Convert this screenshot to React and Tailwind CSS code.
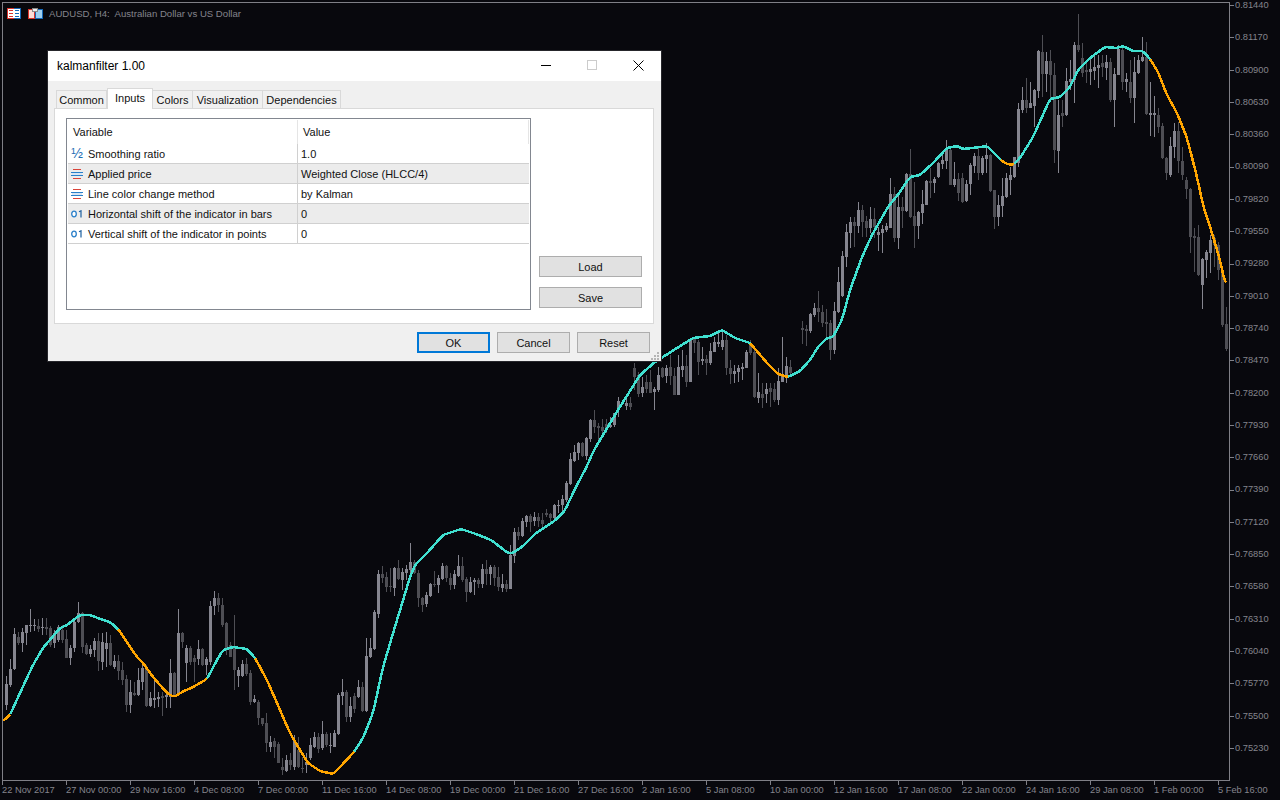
import React from "react";

const pts = [[3,721],[10,715],[20,693],[33,665],[43,648],[60,628],[67,625],[80,615],[90,615],[103,620],[110,622],[118,629],[127,642],[137,657],[143,663],[153,677],[167,693],[174,697],[182,692],[193,687],[207,679],[217,660],[223,650],[233,647],[247,649],[255,658],[267,680],[277,703],[290,733],[300,750],[308,763],[320,771],[333,774],[340,767],[354,752],[363,738],[373,713],[383,667],[397,620],[401,607],[410,577],[415,565],[428,552],[443,535],[461,529],[476,534],[491,540],[508,553],[513,553],[523,546],[536,533],[553,522],[564,512],[576,487],[586,468],[594,450],[618,410],[640,375],[655,362],[677,348],[693,338],[710,336],[722,330],[735,338],[750,343],[767,363],[778,374],[788,377],[800,371],[810,360],[818,347],[827,338],[833,337],[842,320],[850,290],[862,257],[872,235],[888,207],[900,192],[910,177],[920,175],[933,163],[947,148],[957,146],[963,149],[973,148],[987,146],[1002,161],[1007,164],[1013,165],[1020,158],[1033,137],[1050,99],[1060,97],[1070,87],[1078,70],[1090,58],[1105,47],[1117,48],[1123,46],[1133,51],[1143,51],[1150,59],[1158,72],[1167,95],[1177,113],[1187,138],[1197,177],[1203,205],[1212,233],[1220,260],[1226,287]];
const orangeRanges = [[3,10],[118,207],[255,354],[750,788],[1001,1014],[1150,1227]];
function lerp(arr, x) {
  for (let i = 1; i < arr.length; i++) if (x <= arr[i][0]) { const a = arr[i-1], b = arr[i]; return a[1] + (b[1]-a[1]) * (x-a[0]) / (b[0]-a[0]); }
  return arr[arr.length-1][1];
}
function smooth(x) {
  let s = 0, n = 0;
  for (let k = -2; k <= 2; k++) { const xx = x + k; if (xx < 3 || xx > 1226) continue; s += lerp(pts, xx); n++; }
  return (s / n).toFixed(1);
}
function segments() {
  const out = [];
  let cur = null, curO = null;
  for (let x = 3; x <= 1226; x += 1) {
    const o = orangeRanges.some(([a,b]) => x >= a && x < b);
    if (o !== curO) { if (cur) cur.d += ` L${x} ${smooth(x)}`; cur = { o, d: `M${x} ${smooth(x)}` }; out.push(cur); curO = o; }
    else cur.d += ` L${x} ${smooth(x)}`;
  }
  return out;
}

const z6 = [[19,258,282,345,360,1],[31,207,237,285,290,1],[43,115,132,238,240,1],[55,125,140,158,165,0],[67,115,125,158,185,1],[79,105,105,130,165,1],[91,57,105,108,125,1],[103,88,105,108,122,1],[115,88,108,118,125,0],[127,85,110,115,135,1],[139,85,110,118,135,0],[151,108,115,165,170,0],[163,120,130,160,175,1],[175,105,110,150,155,1],[187,105,120,150,160,0],[199,120,148,203,205,0],[211,165,175,205,225,1],[223,90,95,175,185,1],[235,37,70,95,100,1],[247,65,70,170,188,0],[259,160,165,192,195,0],[271,165,178,192,200,1],[283,145,152,180,200,1],[295,130,152,212,242,0],[307,130,155,215,240,1],[319,127,158,178,230,1],[331,135,158,225,228,0],[343,195,212,232,238,1],[355,195,212,242,270,0],[367,215,240,270,285,0],[379,255,268,345,365,0],[391,270,305,345,370,1],[403,275,308,315,318,0],[415,235,270,315,318,1],[427,225,235,275,300,1],[439,225,235,348,350,0],[451,305,325,348,350,1],[463,265,325,330,355,1],[475,305,320,328,352,1],[487,305,318,325,377,0],[499,305,315,322,355,1],[511,208,250,322,355,1],[523,245,250,315,318,0],[535,57,128,310,315,1],[547,125,128,155,175,0],[559,165,175,220,275,1],[571,168,175,215,225,0],[583,195,205,215,275,0],[595,150,178,208,225,1],[607,175,178,225,228,0],[619,200,208,225,255,1],[631,32,48,215,225,1],[643,3,25,48,75,1],[655,10,25,45,65,0],[667,25,45,105,110,0],[679,95,100,175,195,0],[691,155,165,200,200,0],[703,75,175,240,300,0],[715,230,240,258,290,1],[727,210,222,258,260,1],[739,205,222,252,258,0],[751,240,248,335,345,0],[763,315,328,336,340,1],[775,330,335,385,405,0],[787,383,385,403,408,0],[799,370,398,460,485,0],[811,438,455,470,485,1],[823,445,452,470,505,0],[835,455,462,518,520,0],[847,505,530,540,555,0],[859,495,510,542,545,1],[871,490,510,525,540,0],[883,435,450,530,540,1],[895,440,480,532,535,0],[907,500,533,538,550,0],[919,490,515,525,550,1],[931,445,465,505,510,1],[943,425,440,470,475,1],[955,430,440,477,488,0],[967,392,432,475,480,1],[979,425,432,465,470,0],[991,430,465,468,488,1],[1003,420,428,470,470,1],[1015,310,315,432,435,1],[1027,268,307,318,345,1],[1039,300,305,380,395,0],[1051,320,348,382,395,1],[1063,310,318,358,368,0],[1075,270,292,320,325,1],[1087,275,292,362,365,0],[1099,145,198,362,365,1],[1111,145,175,200,205,1],[1123,60,67,178,180,1]];
const zA = [[7,480,492,612,625,1],[19,468,492,503,520,0],[31,485,502,530,545,0],[43,475,528,532,545,0],[55,472,474,533,558,1],[67,450,475,507,510,0],[79,475,487,510,540,1],[91,465,477,488,510,1],[103,400,457,480,490,1],[115,450,457,490,492,0],[127,480,490,563,590,0],[139,560,565,585,605,0],[151,545,555,582,592,1],[163,518,522,558,560,1],[175,483,522,526,530,0],[187,495,505,525,548,1],[199,460,468,507,510,1],[211,465,468,505,515,0],[223,490,503,525,540,0],[235,480,492,525,537,1],[247,435,468,498,500,1],[259,440,468,510,515,0],[271,500,507,545,575,0],[283,500,516,547,548,1],[295,505,510,515,555,1],[307,505,510,522,535,0],[319,462,477,522,535,1],[331,450,477,492,525,0],[343,465,472,492,525,1],[355,465,472,503,528,0],[367,472,501,532,542,0],[379,492,522,535,545,1],[391,510,522,537,545,0],[403,405,435,537,537,1],[415,355,366,437,460,1],[427,352,366,378,390,0],[439,325,333,378,380,1],[451,315,318,337,350,1],[463,313,318,337,365,0],[475,305,321,333,348,1],[487,310,321,333,350,0],[499,308,330,343,360,0],[511,297,309,315,320,0],[523,310,311,325,335,0],[535,283,285,325,330,1],[547,270,285,288,310,1],[559,255,268,285,305,1],[571,212,220,270,275,1],[583,130,147,223,225,1],[595,105,127,152,155,1],[607,95,100,130,150,1],[619,97,98,137,140,0],[631,80,84,137,150,1],[643,28,30,87,95,1],[655,0,30,50,70,0],[667,40,47,53,95,0],[679,28,50,63,85,0],[691,28,42,55,70,0],[703,20,45,50,55,1],[715,10,10,45,50,1]];
const z4 = [[655,470,482,510,530,1],[679,465,488,498,510,1],[691,470,488,500,510,0],[703,370,385,410,450,0],[715,395,405,462,470,0],[727,410,440,460,470,1],[739,405,425,448,460,0],[751,390,425,460,460,0],[763,440,448,455,510,1],[775,380,405,450,455,1],[787,380,385,410,415,0],[799,375,383,408,430,1],[811,345,382,408,435,0],[823,385,408,465,465,0],[835,345,380,465,465,1],[847,330,378,390,410,1],[859,345,378,425,440,0],[871,295,300,425,425,1],[883,290,298,310,340,0],[895,300,305,365,405,0],[907,320,358,362,375,1],[919,345,358,370,405,0],[931,310,332,370,375,1],[943,290,305,335,335,1],[955,275,305,313,320,1],[967,270,300,320,330,1],[979,285,300,385,405,0],[991,360,385,402,432,0],[1003,375,392,402,430,1],[1015,375,385,397,425,1],[1027,370,382,388,420,1],[1039,330,335,385,385,1],[1051,300,310,340,345,0],[1063,320,335,472,475,0],[1075,400,457,475,490,1],[1087,430,463,475,505,0],[1099,430,447,463,490,1],[1111,430,445,455,500,0],[1123,430,447,480,485,0],[1135,385,422,480,495,1],[1147,290,405,425,425,1],[1159,350,378,405,430,1],[1171,360,382,400,405,0]];
const zB = [[7,543,565,570,612,0],[19,555,567,573,618,0],[31,520,522,573,578,1],[43,490,503,525,530,1],[55,453,503,517,545,0],[67,495,517,548,560,0],[79,507,545,552,595,0],[91,540,550,630,660,0],[103,487,513,630,642,1],[115,380,426,517,520,1],[127,333,348,468,470,1],[139,252,276,350,380,1],[151,230,246,278,325,1],[163,230,246,258,320,0],[175,186,210,258,278,1],[187,195,210,246,290,0],[199,228,242,264,290,0],[211,200,237,265,280,1],[223,205,237,262,295,0],[235,260,277,285,333,1],[247,255,267,278,338,1],[259,250,258,270,275,1],[271,114,162,264,265,1],[283,140,162,294,305,0],[295,165,200,293,326,1],[307,170,200,212,265,0],[319,100,102,212,215,1],[331,27,102,230,235,0],[343,125,228,258,323,0],[355,213,216,258,296,1],[367,150,192,218,252,1],[379,120,122,194,195,1],[391,85,122,130,175,0],[403,112,116,128,160,1],[415,65,68,110,115,1],[427,40,60,72,88,1],[439,0,30,62,88,1],[451,28,30,135,135,0],[463,66,117,135,140,1],[475,100,117,158,182,0],[487,98,114,185,188,0],[499,120,132,184,187,1],[511,70,75,133,165,1],[523,40,48,78,98,1],[535,25,48,98,120,0],[547,48,53,98,105,1],[559,10,45,57,100,1],[571,42,44,152,155,0],[583,150,150,230,268,0],[595,165,195,232,258,1],[607,115,168,198,232,1],[619,100,114,172,174,1],[631,82,105,120,165,1]];
const z5 = [[44,470,470,530,533,1],[55,310,328,490,500,1],[67,262,300,330,340,1],[79,235,300,325,340,0],[91,245,310,325,325,1],[103,268,270,318,380,1],[115,150,152,272,295,1],[127,105,155,222,290,0],[139,155,183,222,275,1],[151,150,182,225,300,0],[163,190,225,450,490,0],[175,300,345,452,520,1],[187,300,340,348,380,0],[199,205,243,345,348,1],[211,180,237,245,270,1],[223,125,135,240,310,1],[235,42,135,150,155,0],[247,130,175,220,230,0],[259,180,210,215,250,0],[271,170,208,215,255,1],[283,165,200,212,240,1],[295,165,195,205,265,1],[307,165,190,200,230,0],[319,165,185,205,240,1],[331,175,185,300,305,0],[343,205,222,300,380,1],[355,135,148,225,225,1],[367,140,150,245,270,0],[379,220,237,245,275,1],[391,180,245,293,310,0],[403,170,215,293,368,1],[415,165,180,220,222,1],[427,110,170,182,185,1],[439,125,170,342,345,0],[451,245,340,345,408,1],[463,288,340,345,410,1],[475,325,345,380,400,0],[487,370,378,475,478,0],[499,470,475,520,540,0],[511,410,438,525,530,1],[523,368,393,440,475,1],[535,365,393,482,520,0],[547,440,482,525,540,0]];
const z7 = [[259,-10,0,28,57,0],[271,25,28,170,218,0],[283,145,168,174,275,0],[295,135,172,285,288,0],[307,235,237,315,387,1],[319,210,215,240,293,1],[331,165,180,218,278,1],[343,165,175,195,260,0],[355,185,195,270,300,0],[367,265,270,435,440,0],[379,381,432,507,513,0]];

function candles() {
  let light = "", dark = "";
  const add = (tbl, x0, y0) => {
    for (const [zx, hi, top, bot, lo, l] of tbl) {
      const x = 2 + 4 * Math.round((x0 + zx / 3 - 2) / 4);
      const Y = (v) => Math.round(y0 + v / 3);
      const d = `M${x} ${Y(hi)}h1V${Y(lo)}h-1z M${x-1} ${Y(top)}h3V${Math.max(Y(bot), Y(top)+1)}h-3z `;
      if (l) light += d; else dark += d;
    }
  };
  add(z6, 0, 590);
  add(zA, 376, 410);
  add(z4, 400, 240);
  add(zB, 800, 140);
  add(z5, 1000, 0);
  add(z7, 1100, 180);
  return { light, dark };
}

const prices = ["0.81440","0.81170","0.80900","0.80630","0.80360","0.80090","0.79820","0.79550","0.79280","0.79010","0.78740","0.78470","0.78200","0.77930","0.77660","0.77390","0.77120","0.76850","0.76580","0.76310","0.76040","0.75770","0.75500","0.75230"];
const dates = ["22 Nov 2017","27 Nov 00:00","29 Nov 16:00","4 Dec 08:00","7 Dec 00:00","11 Dec 16:00","14 Dec 08:00","19 Dec 00:00","21 Dec 16:00","27 Dec 16:00","2 Jan 16:00","5 Jan 08:00","10 Jan 00:00","12 Jan 16:00","17 Jan 08:00","22 Jan 00:00","24 Jan 16:00","29 Jan 08:00","1 Feb 00:00","5 Feb 16:00"];

const Half = () => (
  <span className="text-[#1f6fb5] text-[14px] leading-none -mt-[1px]">½</span>
);
const Enum = () => (
  <svg width="12" height="12" viewBox="0 0 12 12" className="shrink-0" shapeRendering="crispEdges">
    <rect x="2" y="1" width="8" height="1" fill="#d9443a" />
    <rect x="0" y="4" width="12" height="1" fill="#2a7fc9" />
    <rect x="1" y="5" width="10" height="2" fill="#d5e6f5" />
    <rect x="0" y="7" width="12" height="1" fill="#2a7fc9" />
    <rect x="2" y="10" width="8" height="1" fill="#d9443a" />
  </svg>
);
const Num = () => (
  <svg width="12" height="8" viewBox="0 0 12 8" className="shrink-0">
    <ellipse cx="3" cy="4" rx="2.3" ry="2.8" fill="#fff" stroke="#2a7fc9" strokeWidth="1.3" />
    <path d="M8 1.8 10 0.8V7.5" fill="none" stroke="#1c5f9f" strokeWidth="1.2" />
  </svg>
);

const rows = [
  { icon: <Half />, name: "Smoothing ratio", value: "1.0" },
  { icon: <Enum />, name: "Applied price", value: "Weighted Close (HLCC/4)", alt: true },
  { icon: <Enum />, name: "Line color change method", value: "by Kalman" },
  { icon: <Num />, name: "Horizontal shift of the indicator in bars", value: "0", alt: true },
  { icon: <Num />, name: "Vertical shift of the indicator in points", value: "0" },
];
const tabs = [["Common", "w-[51px]"], ["Inputs", "w-[46px]"], ["Colors", "w-[40px]"], ["Visualization", "w-[70px]"], ["Dependencies", "w-[78px]"]];

function Btn({ children, className = "", primary }) {
  return (
    <div className={`flex items-center justify-center h-[21px] pt-px bg-[#e1e1e1] text-[#111] ${primary ? "border-2 border-[#0078d7]" : "border border-[#adadad]"} ${className}`}>{children}</div>
  );
}

export default function App() {
  const { light, dark } = candles();
  const segs = segments();
  return (
    <div className="w-[1280px] h-[800px] bg-[#08080d] flex flex-col overflow-hidden relative font-[Liberation_Sans]">
      <div className="flex h-[781px] pt-[2px]">
        <div className="relative ml-[2px] w-[1228px] border border-[#7f7f86] shrink-0">
          <svg width="1226" height="777" viewBox="3 3 1226 777" className="block">
            <path d={dark} fill="#4e4e54" shapeRendering="crispEdges" />
            <path d={light} fill="#85858f" shapeRendering="crispEdges" />
            {segs.map((s, i) => (
              <path key={i} d={s.d} fill="none" stroke={s.o ? "#ffa500" : "#40e0d0"} strokeWidth="2.5" strokeLinejoin="round" shapeRendering="crispEdges" />
            ))}
          </svg>
          <div className="absolute left-[4px] top-[4px] flex items-center gap-[6px] h-[14px]">
            <svg width="36" height="12" viewBox="0 0 36 12" shapeRendering="crispEdges">
              <rect x="0" y="0" width="7" height="11" fill="#d8322a" />
              <rect x="7" y="0" width="7" height="11" fill="#1468b8" />
              <rect x="1" y="1" width="12" height="9" fill="#fff" />
              <rect x="2" y="2" width="4" height="1" fill="#d8322a" /><rect x="2" y="5" width="4" height="1" fill="#d8322a" /><rect x="2" y="8" width="4" height="1" fill="#d8322a" />
              <rect x="8" y="2" width="4" height="1" fill="#1468b8" /><rect x="8" y="5" width="4" height="1" fill="#1468b8" /><rect x="8" y="8" width="4" height="1" fill="#1468b8" />
              <rect x="21" y="1" width="7" height="10" fill="#d8322a" />
              <rect x="28" y="1" width="8" height="10" fill="#1468b8" />
              <rect x="22" y="2" width="5" height="8" fill="#fbdcd8" />
              <rect x="29" y="2" width="6" height="8" fill="#9fd0f0" />
              <rect x="25" y="0" width="6" height="4" fill="#8a8a8a" />
              <rect x="26" y="1" width="4" height="2" fill="#eee" />
            </svg>
            <span className="text-[9.6px] leading-none text-[#84848c] whitespace-pre">AUDUSD, H4:  Australian Dollar vs US Dollar</span>
          </div>
        </div>
        <div className="flex flex-col text-[9.3px] text-[#84848c] w-[50px] -ml-px">
          {prices.map((p) => (
            <div key={p} className="flex items-center h-[32.3px] shrink-0 first:mt-[-12.5px]">
              <span className="w-[5px] h-px bg-[#7f7f86]" />
              <span className="ml-[1px] leading-none">{p}</span>
            </div>
          ))}
        </div>
      </div>
      <div className="flex pl-[2px] text-[9.3px] text-[#84848c]">
        {dates.map((d) => (
          <div key={d} className="w-[64px] shrink-0">
            <div className="w-px h-[4px] bg-[#7f7f86]" />
            <div className="leading-none pt-[1px] whitespace-nowrap">{d}</div>
          </div>
        ))}
      </div>

      <div className="absolute left-[47px] top-[50px] w-[615px] h-[312px] border border-[#26262b] bg-[#f0f0f0] flex flex-col text-[11px] text-[#111]">
        <div className="h-[30px] bg-white flex items-center justify-between shrink-0">
          <span className="pl-[9px] text-[12px] text-black">kalmanfilter 1.00</span>
          <div className="flex">
            <div className="w-[46px] h-[30px] pb-[1px] flex items-center justify-center"><svg width="11" height="11" shapeRendering="crispEdges"><rect x="0" y="5" width="10" height="1" fill="#000" /></svg></div>
            <div className="w-[46px] h-[30px] pb-[1px] flex items-center justify-center"><svg width="11" height="11" shapeRendering="crispEdges"><rect x="0.5" y="0.5" width="9" height="9" fill="none" stroke="#ccc" /></svg></div>
            <div className="w-[46px] h-[30px] pb-[1px] flex items-center justify-center"><svg width="11" height="11"><path d="M0.5 0.5 10.5 10.5M10.5 0.5 0.5 10.5" stroke="#000" strokeWidth="1" fill="none" /></svg></div>
          </div>
        </div>
        <div className="flex items-end h-[27px] pl-[8px] shrink-0 relative z-10">
          {tabs.map(([t, w]) =>
            t === "Inputs" ? (
              <div key={t} className={`${w} h-[21px] -mb-px bg-white border border-b-0 border-[#d9d9d9] flex items-center justify-center pb-[1px]`}>{t}</div>
            ) : (
              <div key={t} className={`${w} h-[18px] pt-[2px] bg-[#f0f0f0] border border-b-0 border-l-0 first:border-l border-[#d9d9d9] flex items-center justify-center`}>{t}</div>
            )
          )}
        </div>
        <div className="ml-[6px] w-[600px] h-[216px] bg-white border border-[#d9d9d9] flex pl-[11px] pt-[9px] shrink-0">
          <div className="w-[465px] h-[192px] border border-[#828790] px-px pt-px shrink-0">
            <div className="flex h-[24px] items-center">
              <div className="w-[230px] h-full flex items-center pl-[5px] border-r border-[#e5e5e5]">Variable</div>
              <div className="flex-1 h-full flex items-center pl-[5px] border-r border-[#e5e5e5]">Value</div>
            </div>
            {rows.map((r) => (
              <div key={r.name} className={`flex h-[20px] items-center border-b border-[#d0d0d0] ${r.alt ? "bg-[#ececec]" : "bg-white"}`}>
                <div className="w-[230px] h-full flex items-center pl-[3px] gap-[5px] border-r border-[#d0d0d0]">
                  <div className="w-[12px] flex justify-center shrink-0">{r.icon}</div>
                  <span className="whitespace-nowrap pt-[1px]">{r.name}</span>
                </div>
                <div className="pl-[3px] pt-[1px]">{r.value}</div>
              </div>
            ))}
          </div>
          <div className="ml-[8px] w-[103px] flex flex-col justify-end gap-[10px] pb-[15px]">
            <Btn>Load</Btn>
            <Btn>Save</Btn>
          </div>
        </div>
        <div className="flex justify-end gap-[7px] pr-[11px] pt-[8px] relative">
          <Btn primary className="w-[73px]">OK</Btn>
          <Btn className="w-[73px]">Cancel</Btn>
          <Btn className="w-[73px]">Reset</Btn>
          <svg width="9" height="9" className="absolute right-[1px] bottom-[-8px]" shapeRendering="crispEdges" fill="#b5b5b5">
            <rect x="6" y="0" width="2" height="2" /><rect x="3" y="3" width="2" height="2" /><rect x="6" y="3" width="2" height="2" /><rect x="0" y="6" width="2" height="2" /><rect x="3" y="6" width="2" height="2" /><rect x="6" y="6" width="2" height="2" />
          </svg>
        </div>
      </div>
    </div>
  );
}
